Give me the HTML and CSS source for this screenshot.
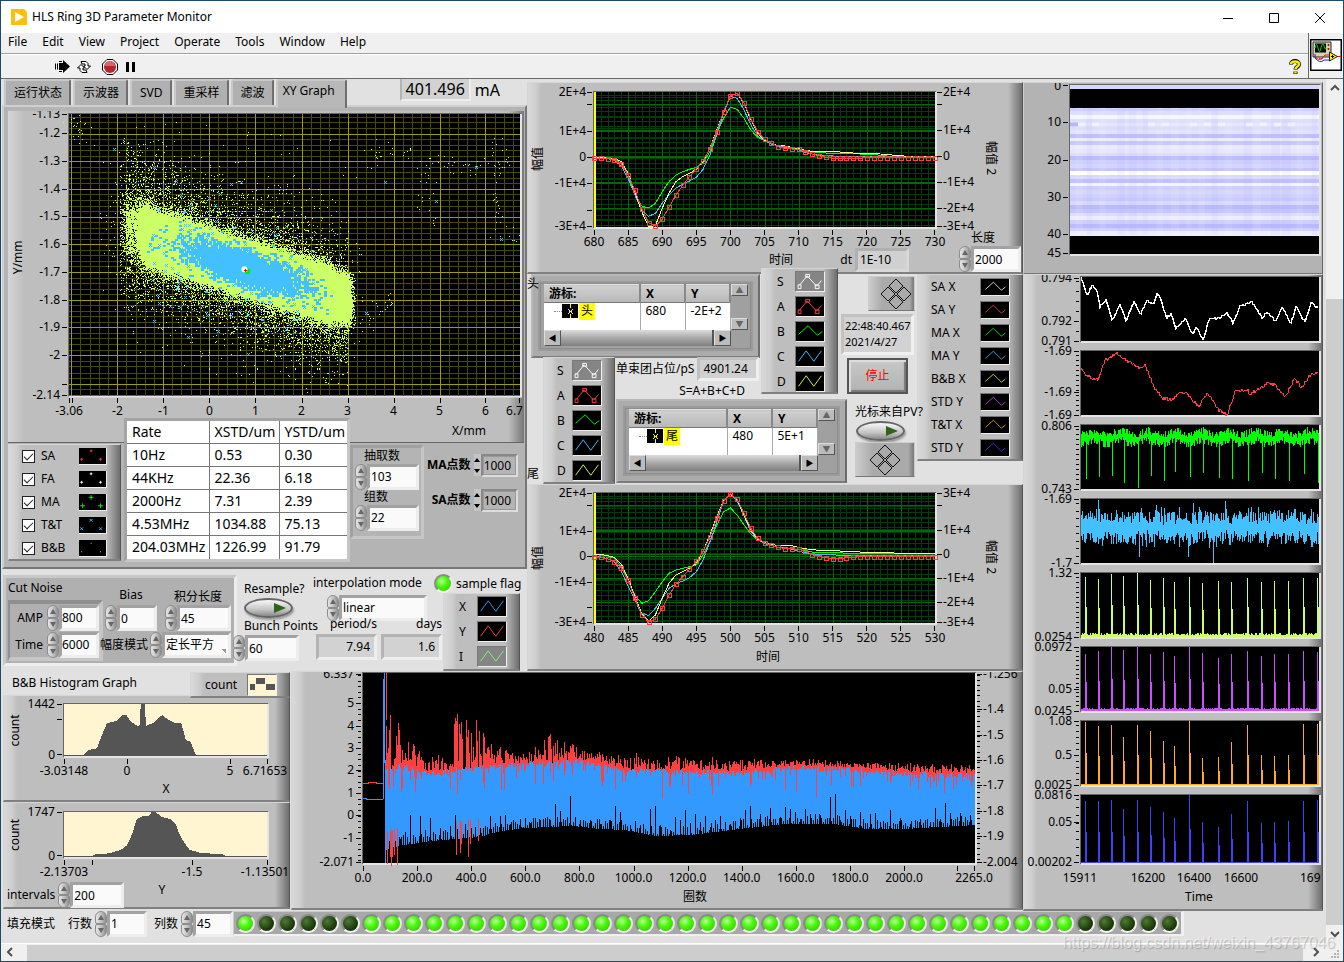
FILE: index.html
```html
<!DOCTYPE html>
<html lang="zh-CN">
<head>
<meta charset="utf-8">
<title>HLS Ring 3D Parameter Monitor</title>
<link rel="stylesheet" href="styles.css">
</head>
<body>
<svg class="defs" aria-hidden="true">
  <defs>
    <symbol id="z1" viewBox="0 0 28 20"><path d="M2 13 L12 4 L22 14 L27 10" fill="none" stroke="currentColor"/></symbol>
    <symbol id="z2" viewBox="0 0 28 20"><path d="M2 15 L10 4 L18 15 L26 4" fill="none" stroke="currentColor"/></symbol>
    <symbol id="zs" viewBox="0 0 28 20"><path d="M3 14 L11 4 L21 15 L26 9 M1.500 13.500h3v4h-3zM9.500 2.500h4v3h-4zM19.500 13.500h4v4h-4z" fill="none" stroke="currentColor"/></symbol>
    <symbol id="p1" viewBox="0 0 28 17"><path d="M1 12h3M2.500 10.500v3M11 3h3M12.500 1.500v3M21 12h3M22.500 10.500v3" stroke="currentColor"/></symbol>
    <symbol id="p2" viewBox="0 0 28 17"><path d="M1 12.500h5M3.500 10v5M10 3.500h5M12.500 1v5M20 12.500h5M22.500 10v5" stroke="currentColor"/></symbol>
    <symbol id="p3" viewBox="0 0 28 17"><path d="M1 11l3 3m0-3l-3 3M11 2l3 3m0-3l-3 3M21 11l3 3m0-3l-3 3" stroke="currentColor"/></symbol>
    <symbol id="p4" viewBox="0 0 28 17"><path d="M2 12.500h1M12 3.500h1M22 12.500h1" stroke="currentColor"/></symbol>
    <symbol id="cur" viewBox="0 0 16 14"><path d="M8.500 0v4M8.500 10v4M6 5l5 5M11 5l-5 5M7 7.500h3" stroke="#ff0" fill="none"/></symbol>
    <symbol id="dia" viewBox="0 0 32 32"><path d="M16 1l7 7-7 7-7-7zM8 9l7 7-7 7-7-7zM24 9l7 7-7 7-7-7zM16 17l7 7-7 7-7-7z" fill="none" stroke="#111"/></symbol>
  </defs>
</svg>
<div class="window">
  <header class="titlebar">
    <svg class="app-icon" viewBox="0 0 16 16"><path d="M0 0h13l3 3v13H0z" fill="#fdbf0f"/><path d="M4 3l9 5-9 5z" fill="#fff"/></svg>
    <h1>HLS Ring 3D Parameter Monitor</h1>
    <div class="win-buttons">
      <button aria-label="Minimize"><svg viewBox="0 0 12 12"><path d="M1 6.500h10" stroke="#000"/></svg></button>
      <button aria-label="Maximize"><svg viewBox="0 0 12 12"><path d="M1.500 1.500h9v9h-9z" fill="none" stroke="#000"/></svg></button>
      <button aria-label="Close"><svg viewBox="0 0 12 12"><path d="M1 1l10 10M11 1L1 11" stroke="#000"/></svg></button>
    </div>
  </header>
  <div class="bars">
    <div class="bars-main">
      <nav class="menubar"><a href="#">File</a><a href="#">Edit</a><a href="#">View</a><a href="#">Project</a><a href="#">Operate</a><a href="#">Tools</a><a href="#">Window</a><a href="#">Help</a></nav>
      <div class="toolbar">
        <button aria-label="Run"><svg viewBox="0 0 16 16"><path d="M1.500 4.500v6M3.500 4.500v6" stroke="#000"/><path d="M5 4h4V1l7 6.500L9 14v-3H5z"/><path d="M5 12.500h3M5 2.500h3" stroke="#000"/></svg></button>
        <button aria-label="Run continuously"><svg viewBox="0 0 16 16"><path d="M5 2.500h5l2 2V7h2.500L11 10.500 7.500 7H9V5H6zM11 13.500H6l-2-2V9H1.500L5 5.500 8.500 9H7v2h3z" fill="#fff" stroke="#000"/></svg></button>
        <button aria-label="Abort" class="abort"><svg viewBox="0 0 16 16"><path d="M5 .5h6L15.500 5v6L11 15.500H5L.5 11V5z" fill="#fff" stroke="#000"/><circle cx="8" cy="8" r="6" fill="#b8262c"/><path d="M3 7a5 5 0 0 1 10 0z" fill="#d8666a"/></svg></button>
        <button aria-label="Pause"><svg viewBox="0 0 16 16"><path d="M2 3h3v10H2zM8 3h3v10H8z"/></svg></button>
        <button aria-label="Help" class="help"><svg viewBox="0 0 12 16"><path d="M2 5.500C2 1 10 1 10 5.200 10 8 6.500 7.500 6.500 10.500M6.500 12.500v2.500" fill="none" stroke="#000" stroke-width="4"/><path d="M2 5C2 1.500 10 1.500 10 5 10 8 6.500 7.500 6.500 10M6.500 12.500v2" fill="none" stroke="#fe0" stroke-width="2.500"/></svg></button>
      </div>
    </div>
    <div class="vi-icon"><svg viewBox="0 0 32 32"><path d="M.5.500h31v31H.5z" fill="#fff" stroke="#000" stroke-width="2"/><path d="M3 3h18v15H3z" fill="#d8d2a8" stroke="#222"/><path d="M5 4.500h11v9H5z" fill="#000"/><path d="M5 9q1.500-7 3 0t3 0 3-2 2 2" fill="none" stroke="#0d0"/><circle cx="18.500" cy="6" r="1" fill="#900"/><circle cx="18.500" cy="10" r="1" fill="#900"/><path d="M5 18q4 4 8 1M20 16h-5q-4 6-6 3M27 17.500h4" fill="none" stroke="#e11"/><path d="M5 15v4q5 6 9 2h6" fill="none" stroke="#22b"/><path d="M19.500 13v9l8-4.500z" fill="#fe0" stroke="#222"/><path d="M21 17.500h3M22.500 16v3" stroke="#000"/></svg></div>
  </div>

  <div class="workspace">
    <main class="front">
      <div class="front-grid">
        <div class="left-wide">
          <div class="upper">
            <section class="col-a">
              <div class="tabrow">
                <div class="tabs" role="tablist">
                  <button role="tab">运行状态</button><button role="tab">示波器</button><button role="tab">SVD</button><button role="tab">重采样</button><button role="tab">滤波</button><button role="tab" class="active" aria-selected="true">XY Graph</button>
                </div>
                <div class="current"><output>401.496</output><span>mA</span></div>
              </div>
              <div class="tabpage">
                <svg class="plot" id="xy" viewBox="8 111 515 330" role="img" aria-label="XY Graph"></svg>
                <div class="xy-lower">
                  <div class="legend-check raised">
                    <div><input type="checkbox" id="k1" checked><label for="k1">SA</label><svg class="c-red"><use href="#p1"/></svg></div>
                    <div><input type="checkbox" id="k2" checked><label for="k2">FA</label><svg class="c-white"><use href="#p1"/></svg></div>
                    <div><input type="checkbox" id="k3" checked><label for="k3">MA</label><svg class="c-green"><use href="#p2"/></svg></div>
                    <div><input type="checkbox" id="k4" checked><label for="k4">T&amp;T</label><svg class="c-sky"><use href="#p3"/></svg></div>
                    <div><input type="checkbox" id="k5" checked><label for="k5">B&amp;B</label><svg class="c-lime"><use href="#p4"/></svg></div>
                  </div>
                  <div class="std-wrap">
                    <table class="std">
                      <tr><th>Rate</th><th>XSTD/um</th><th>YSTD/um</th></tr>
                      <tr><td>10Hz</td><td>0.53</td><td>0.30</td></tr>
                      <tr><td>44KHz</td><td>22.36</td><td>6.18</td></tr>
                      <tr><td>2000Hz</td><td>7.31</td><td>2.39</td></tr>
                      <tr><td>4.53MHz</td><td>1034.88</td><td>75.13</td></tr>
                      <tr><td>204.03MHz</td><td>1226.99</td><td>91.79</td></tr>
                    </table>
                  </div>
                  <div class="sampling">
                    <label for="n1">抽取数</label>
                    <div class="num"><span class="spin"><button aria-label="+"></button><button aria-label="−"></button></span><input id="n1" value="103"></div>
                    <label for="n2">组数</label>
                    <div class="num"><span class="spin"><button aria-label="+"></button><button aria-label="−"></button></span><input id="n2" value="22"></div>
                  </div>
                  <div class="points">
                    <div><label for="n3">MA点数</label><span class="flatspin"><button aria-label="+"></button><button aria-label="−"></button></span><input id="n3" value="1000"></div>
                    <div><label for="n4">SA点数</label><span class="flatspin"><button aria-label="+"></button><button aria-label="−"></button></span><input id="n4" value="1000"></div>
                  </div>
                </div>
              </div>

              <div class="settings">
                <fieldset class="cut">
                  <legend>Cut Noise</legend>
                  <div class="amp">
                    <div><label for="n5">AMP</label><div class="num"><span class="spin"><button aria-label="+"></button><button aria-label="−"></button></span><input id="n5" value="800"></div></div>
                    <div><label for="n6">Time</label><div class="num"><span class="spin"><button aria-label="+"></button><button aria-label="−"></button></span><input id="n6" value="6000"></div></div>
                  </div>
                  <div class="bias">
                    <div class="bias-col"><label for="n7">Bias</label><div class="num"><span class="spin"><button aria-label="+"></button><button aria-label="−"></button></span><input id="n7" value="0"></div></div>
                    <div class="bias-col"><label for="n8">积分长度</label><div class="num w50"><span class="spin"><button aria-label="+"></button><button aria-label="−"></button></span><input id="n8" value="45"></div></div>
                    <div class="mode"><label for="n9">幅度模式</label><div class="num w68"><span class="spin"><button aria-label="+"></button><button aria-label="−"></button></span><select id="n9"><option>定长平方</option></select></div></div>
                  </div>
                </fieldset>
                <div class="resample">
                  <span id="rs">Resample?</span>
                  <button class="toggle" role="switch" aria-labelledby="rs"><i></i></button>
                  <label for="n10">Bunch Points</label>
                  <div class="num w50"><span class="spin"><button aria-label="+"></button><button aria-label="−"></button></span><input id="n10" value="60"></div>
                </div>
                <div class="interp">
                  <label for="n11">interpolation mode</label>
                  <div class="num"><span class="spin"><button aria-label="+"></button><button aria-label="−"></button></span><select id="n11"><option>linear</option></select></div>
                  <div class="outs"><div><span>period/s</span><output>7.94</output></div><div><span>days</span><output>1.6</output></div></div>
                </div>
                <div class="flag">
                  <div class="flag-row"><i class="led on"></i><span>sample flag</span></div>
                  <div class="legend raised xyi">
                    <div><span>X</span><svg class="c-blue"><use href="#z2"/></svg></div>
                    <div><span>Y</span><svg class="c-red"><use href="#z2"/></svg></div>
                    <div><span>I</span><svg class="c-mint gray"><use href="#z2"/></svg></div>
                  </div>
                </div>
              </div>
            </section>

            <section class="col-b">
              <div class="graph-panel raised">
                <svg class="plot" id="g1" viewBox="528 83 494 166" role="img" aria-label="头 波形"></svg>
                <div class="dt-row">
                  <span class="axis-name">时间</span>
                  <label for="dt">dt</label><output id="dt">1E-10</output>
                  <div class="len"><label for="n12">长度</label><div class="num"><span class="spin"><button aria-label="+"></button><button aria-label="−"></button></span><input id="n12" value="2000"></div></div>
                </div>
              </div>
              <div class="mid">
                <span class="tag tag1">头</span>
                <div class="cursor cursor1">
                  <table><tr><th>游标:</th><th>X</th><th>Y</th></tr><tr><td><i class="dots"></i><svg class="cur"><use href="#cur"/></svg><mark>头</mark></td><td>680</td><td>-2E+2</td></tr></table>
                  <div class="vs"><button aria-label="up">▲</button><button aria-label="down">▼</button></div>
                  <div class="hs"><button aria-label="left">◀</button><span></span><button aria-label="right">▶</button></div>
                </div>
                <div class="legend raised lg2">
                  <div><span>S</span><svg class="c-white gray"><use href="#zs"/></svg></div>
                  <div><span>A</span><svg class="c-red"><use href="#zs"/></svg></div>
                  <div><span>B</span><svg class="c-green"><use href="#z1"/></svg></div>
                  <div><span>C</span><svg class="c-sky"><use href="#z2"/></svg></div>
                  <div><span>D</span><svg class="c-lime"><use href="#z2"/></svg></div>
                </div>
                <div class="legend raised lg1">
                  <div><span>S</span><svg class="c-white gray"><use href="#zs"/></svg></div>
                  <div><span>A</span><svg class="c-red"><use href="#zs"/></svg></div>
                  <div><span>B</span><svg class="c-green"><use href="#z1"/></svg></div>
                  <div><span>C</span><svg class="c-sky"><use href="#z2"/></svg></div>
                  <div><span>D</span><svg class="c-lime"><use href="#z2"/></svg></div>
                </div>
                <div class="bunch"><span>单束团占位/pS</span><output>4901.24</output></div>
                <span class="sum">S=A+B+C+D</span>
                <span class="tag tag2">尾</span>
                <div class="cursor cursor2">
                  <table><tr><th>游标:</th><th>X</th><th>Y</th></tr><tr><td><i class="dots"></i><svg class="cur"><use href="#cur"/></svg><mark>尾</mark></td><td>480</td><td>5E+1</td></tr></table>
                  <div class="vs"><button aria-label="up">▲</button><button aria-label="down">▼</button></div>
                  <div class="hs"><button aria-label="left">◀</button><span></span><button aria-label="right">▶</button></div>
                </div>
                <div class="ctl">
                  <button class="dia dia-a" aria-label="移动游标"><svg><use href="#dia"/></svg></button>
                  <output class="clock">22:48:40.467<br>2021/4/27</output>
                  <button class="stop">停止</button>
                  <span id="pv" class="pv">光标来自PV?</span>
                  <button class="toggle" role="switch" aria-labelledby="pv"><i></i></button>
                  <button class="dia dia-b" aria-label="移动游标"><svg><use href="#dia"/></svg></button>
                </div>
                <div class="legend raised lg3">
                  <div><span>SA X</span><svg class="c-white"><use href="#z1"/></svg></div>
                  <div><span>SA Y</span><svg class="c-red"><use href="#z1"/></svg></div>
                  <div><span>MA X</span><svg class="c-green"><use href="#z1"/></svg></div>
                  <div><span>MA Y</span><svg class="c-sky"><use href="#z1"/></svg></div>
                  <div><span>B&amp;B X</span><svg class="c-lime"><use href="#z1"/></svg></div>
                  <div><span>STD Y</span><svg class="c-purple"><use href="#z1"/></svg></div>
                  <div><span>T&amp;T X</span><svg class="c-orange"><use href="#z1"/></svg></div>
                  <div><span>STD Y</span><svg class="c-navy"><use href="#z1"/></svg></div>
                </div>
              </div>
              <div class="graph-panel raised">
                <svg class="plot" id="g2" viewBox="528 485 494 184" role="img" aria-label="尾 波形"></svg>
              </div>
            </section>
          </div>

          <div class="lower">
            <section class="hist">
              <div class="hist-head"><h2>B&amp;B Histogram Graph</h2><div class="count raised"><span>count</span><svg viewBox="0 0 28 20"><path d="M0 0h28v20H0z" fill="#fff5d0"/><path d="M2 9h5v6H2zM8 3h9v6H8zM18 9h9v6h-9z" fill="#555"/></svg></div></div>
              <div class="raised"><svg class="plot" id="h1" viewBox="4 696 285 104" role="img" aria-label="X histogram"></svg></div>
              <div class="raised hist2"><svg class="plot" id="h2" viewBox="4 803 285 104" role="img" aria-label="Y histogram"></svg>
                <div class="intervals"><label for="n13">intervals</label><div class="num w50"><span class="spin"><button aria-label="+"></button><button aria-label="−"></button></span><input id="n13" value="200"></div></div>
              </div>
            </section>
            <section class="raised wave"><svg class="plot" id="wf" viewBox="292 672 730 236" role="img" aria-label="圈数"></svg></section>
          </div>
        </div>

        <section class="col-c">
          <div class="flat"><svg class="plot" id="im" viewBox="1024 83 298 190" role="img" aria-label="填充强度图"></svg></div>
          <div class="raised"><svg class="plot" id="st" viewBox="1024 275 298 634" role="img" aria-label="Time"></svg></div>
        </section>
      </div>

      <div class="fill">
        <span class="fill-name">填充模式</span>
        <label for="n14">行数</label><div class="num"><span class="spin"><button aria-label="+"></button><button aria-label="−"></button></span><input id="n14" value="1"></div>
        <label for="n15" class="second">列数</label><div class="num"><span class="spin"><button aria-label="+"></button><button aria-label="−"></button></span><input id="n15" value="45"></div>
        <div class="leds" id="leds"></div>
      </div>
    </main>
    <div class="vbar"><button aria-label="Scroll up"><svg viewBox="0 0 10 10"><path d="M1 7l4-4 4 4" fill="none" stroke="#505050" stroke-width="2"/></svg></button><span></span><button aria-label="Scroll down"><svg viewBox="0 0 10 10"><path d="M1 3l4 4 4-4" fill="none" stroke="#505050" stroke-width="2"/></svg></button></div>
  </div>
  <div class="hbar"><button aria-label="Scroll left"><svg viewBox="0 0 10 10"><path d="M7 1L3 5l4 4" fill="none" stroke="#505050" stroke-width="2"/></svg></button><span></span><button aria-label="Scroll right"><svg viewBox="0 0 10 10"><path d="M3 1l4 4-4 4" fill="none" stroke="#505050" stroke-width="2"/></svg></button>
    <svg class="grip" viewBox="0 0 10 10"><path d="M7 0h2v2H7zM4 3h2v2H4zM7 3h2v2H7zM1 6h2v2H1zM4 6h2v2H4zM7 6h2v2H7z" fill="#b4b4b4"/></svg></div>
  <span class="watermark">https://blog.csdn.net/weixin_43767046</span>
</div>
<script src="app.js"></script>
</body>
</html>
```
FILE: styles.css
```css
* { box-sizing: border-box; }
body {
  margin: 0;
  font: 12px/16px "Noto Sans", "Noto Sans CJK SC", sans-serif;
  color: #000;
  background: #e1e1e1;
}
button, input, select, output { font: inherit; color: inherit; }
button { padding: 0; border: 0; background: none; }
.defs { position: absolute; width: 0; height: 0; }

.window {
  position: relative;
  display: flex;
  flex-direction: column;
  min-height: 100vh;
  border: 1px solid #1b4a6b;
  background: #e1e1e1;
}
.titlebar { display: flex; align-items: center; height: 32px; padding-left: 10px; background: #fff; }
.app-icon { width: 16px; height: 16px; }
.titlebar h1 { margin: 0 0 0 5px; font-size: 12px; font-weight: 400; flex: 1; }
.win-buttons { display: flex; }
.win-buttons button { width: 46px; height: 30px; }
.win-buttons svg { width: 12px; height: 12px; vertical-align: middle; }

.bars { display: flex; height: 46px; background: #f0f0f0; border-bottom: 1px solid #6a6a6a; }
.bars-main { flex: 1; display: flex; flex-direction: column; }
.menubar { display: flex; gap: 15px; height: 21px; padding: 1px 0 0 7px; border-bottom: 1px solid #a0a0a0; }
.menubar a { color: #000; text-decoration: none; }
.toolbar { display: flex; align-items: center; height: 24px; padding: 0 7px 0 53px; gap: 6px; border-top: 1px solid #fff; }
.toolbar svg { width: 16px; height: 16px; display: block; }
.toolbar .abort { margin-left: 4px; }
.toolbar .help { margin-left: auto; }
.toolbar .help svg { width: 12px; }
.vi-icon { width: 35px; border-left: 1px solid #6a6a6a; padding: 6px 0 0 1px; }
.vi-icon svg { width: 32px; height: 32px; display: block; }

.workspace { flex: 1; display: flex; }
.front { flex: 1; min-width: 0; padding: 0 3px 0 1px; border-bottom: 1px solid #fff; }
.front-grid { display: grid; grid-template-columns: 1021fr 300fr; }
.left-wide { min-width: 0; }
.upper { display: grid; grid-template-columns: 525fr 496fr; height: 592px; }
.lower { display: grid; grid-template-columns: 289fr 732fr; height: 239px; }
.col-a, .col-b, .col-c, .hist { min-width: 0; }
.plot { display: block; width: 100%; height: auto; overflow: hidden; font-size: 12px; }

.raised {
  background: linear-gradient(90deg, #d9d9d9 0, #cecece 8px, #bebebe 13px, #bebebe calc(100% - 14px), #6e6e6e 100%);
  border: 1px solid #d6d6d6;
  border-right-color: #555;
  border-bottom: 2px solid #808080;
}
.flat { background: #b3b3b3; border: 1px solid #d0d0d0; border-right: 1px solid #666; border-bottom: 1px solid #777; }

/* numeric controls */
.num { display: flex; align-items: center; }
.num input, .num select {
  width: 40px; height: 26px; padding: 0 1px; margin: 0;
  border: 3px solid; border-color: #a2a2a2 #ededed #ededed #a2a2a2;
  border-radius: 0; background: #fafafa; appearance: none; outline: 0;
}
.num.w50 input { width: 54px; }
.num.w68 select { width: 69px; background: #fafafa linear-gradient(45deg, transparent 50%, #999 50%) no-repeat 57px 14px / 4px 4px; }
.spin { display: flex; flex-direction: column; width: 12px; height: 26px; }
.spin button {
  flex: 1; position: relative;
  border: 1px solid #8d8d8d; border-radius: 6px 6px 2px 2px;
  background: linear-gradient(90deg, #e6e6e6, #c4c4c4 50%, #8c8c8c);
}
.spin button + button { border-radius: 2px 2px 6px 6px; }
.spin button::before { content: ""; display: block; width: 0; margin: 0 auto; border: 3px solid transparent; border-top: 0; border-bottom: 5px solid #666; }
.spin button + button::before { border-bottom: 0; border-top: 5px solid #666; }

/* tabs */
.tabrow { display: flex; justify-content: space-between; height: 29px; padding-left: 2px; }
.tabs { display: flex; gap: 2px; align-items: flex-start; }
.tabs button {
  height: 26px; padding: 0 7px 1px 8px; white-space: nowrap;
  background: #b0b0b0; border: 2px solid #c8c8c8; border-right-color: #6f6f6f; border-bottom: 0; border-radius: 3px 2px 0 0;
}
.tabs .active { height: 29px; padding: 0 10px 8px 5px; background: #b8b8b8; position: relative; z-index: 1; }
.current { display: flex; align-items: center; gap: 4px; height: 22px; padding-right: 27px; font-size: 16px; }
.current output { height: 22px; padding: 0 4px; line-height: 20px; background: #d2d2d2; border: 2px solid #b4b4b4; border-top: 0; border-right-color: #eee; border-bottom-color: #eee; }
.tabpage { height: 464px; margin-top: -3px; padding: 4px 1px 0 4px; background: #b4b4b4; border: 2px solid #cfcfcf; border-right-color: #777; border-bottom-color: #777; }
#xy { background: linear-gradient(90deg, #d6d6d6 0, #bebebe 16px, #bebebe 97%, #777 100%); border-bottom: 1px solid #666; }

.xy-lower { display: flex; align-items: flex-start; gap: 3px; margin-top: 1px; }
.legend-check { width: 113px; height: 117px; }
.legend-check > div { display: flex; align-items: center; height: 23px; padding-left: 13px; }
.legend-check input { width: 13px; height: 13px; margin: 0 6px 0 0; appearance: none; background: #fff; border: 1px solid #222; }
.legend-check input:checked::before { content: ""; display: block; width: 8px; height: 4px; margin: 2px 1px; border-left: 1px solid #222; border-bottom: 1px solid #222; rotate: -45deg; }
.legend-check label { flex: 1; }
.legend-check svg { width: 28px; height: 17px; margin-right: 13px; background: #000; border-right: 1px solid #eee; border-bottom: 1px solid #eee; }
.std-wrap { position: relative; z-index: 1; flex: none; width: 226px; margin-top: -26px; border: 3px solid #a4a4a4; border-right-color: #c6c6c6; border-bottom-color: #c6c6c6; }
.std { width: 100%; table-layout: fixed; border-collapse: collapse; background: #fff; font-size: 14px; line-height: 20px; }
.std th, .std td { height: 23px; padding: 0 0 0 5px; text-align: left; font-weight: 400; overflow: hidden; white-space: nowrap; border-right: 1px solid #777; border-bottom: 1px solid #777; }
.std th:first-child { width: 82px; }
.std th:nth-child(2) { width: 70px; }
.std tr > :last-child { border-right: 0; }
.std tr:last-child td { border-bottom: 0; }
.sampling { width: 74px; height: 94px; padding: 1px 2px; border: 3px solid #a0a0a0; border-right-color: #c6c6c6; border-bottom-color: #c6c6c6; background: #b4b4b4; margin-left: -3px; margin-top: 1px; }
.sampling label { display: block; padding-left: 9px; height: 15px; line-height: 14px; }
.sampling input { width: 52px; }
.points { padding-top: 10px; }
.points > div { display: flex; align-items: center; justify-content: flex-end; height: 23px; margin-bottom: 12px; }
.points label { font-weight: 700; margin-right: 3px; white-space: nowrap; }
.points input { width: 37px; height: 23px; padding: 0 1px; border: 2px solid #888; border-right-color: #ddd; border-bottom-color: #ddd; outline: 1px solid #999; outline-offset: -3px; background: #b4b4b4; }
.flatspin { display: flex; flex-direction: column; width: 7px; height: 22px; background: #c4c4c4; }
.flatspin button { flex: 1; }
.flatspin button::before { content: ""; display: block; width: 0; margin: 0 auto; border: 3px solid transparent; border-top: 0; border-bottom: 4px solid #000; }
.flatspin button + button::before { border-bottom: 0; border-top: 4px solid #000; }

/* settings strip */
.settings { display: flex; height: 102px; padding: 6px 0 0 1px; }
.cut { display: grid; grid-template-columns: 95px 1fr; grid-template-rows: 22px 1fr; width: 234px; height: 91px; margin: 0; padding: 0 3px 0 2px; border: 3px solid #c8c8c8; border-color: #c8c8c8 #ededed #ededed #c8c8c8; background: #b0b0b0; position: relative; }
.cut legend { float: left; padding: 2px 0; height: 20px; }
.cut .amp { grid-row: 2; border: 4px solid #969696; border-color: #8f8f8f #c6c6c6 #c6c6c6 #8f8f8f; border-left-width: 2px; height: 61px; }
.amp > div { display: flex; align-items: center; justify-content: flex-end; height: 27px; gap: 4px; }
.amp input { padding: 0; }
.bias { grid-column: 2; grid-row: 1 / 3; display: grid; grid-template-columns: 54px 1fr; grid-template-rows: 53px 28px; justify-items: end; }
.bias-col { display: flex; flex-direction: column; align-items: center; justify-content: flex-end; }
.bias-col:first-child label { padding-bottom: 2px; }
.mode { grid-column: 1 / 3; display: flex; align-items: center; gap: 2px; white-space: nowrap; justify-self: end; }
.resample { width: 76px; padding-left: 7px; white-space: nowrap; display: flex; flex-direction: column; }
.resample > span { padding-top: 6px; height: 23px; }
.resample .num { margin: 1px 0 0 -11px; position: relative; }
.toggle { width: 49px; height: 20px; border-radius: 50% / 50%; border: 2px solid #666; background: linear-gradient(#f8f8f8, #c4c4c4 60%, #8a8a8a); box-shadow: 1px 2px 2px #999; display: flex; align-items: center; justify-content: flex-end; padding-right: 5px; }
.toggle i { border: 5px solid transparent; border-left: 12px solid #2f6418; border-right: 0; }
.interp { width: 120px; white-space: nowrap; display: flex; flex-direction: column; }
.interp > label { height: 20px; }
.interp .num { padding-left: 14px; }
.interp select { width: 88px; }
.outs { display: flex; gap: 4px; margin-top: -5px; padding-left: 3px; }
.outs div { display: flex; flex-direction: column; align-items: flex-end; }
.outs output { width: 61px; height: 26px; padding-right: 4px; line-height: 20px; text-align: right; background: #d2d2d2; border: 3px solid #b4b4b4; border-right-color: #eee; border-bottom-color: #eee; }
.outs span { height: 18px; }
.flag { margin-left: auto; width: 93px; }
.flag-row { display: flex; align-items: center; gap: 3px; height: 17px; white-space: nowrap; }
.led { flex: none; width: 19px; height: 19px; border-radius: 50%; border: 2px solid; border-color: #8a8a8a #eee #f4f4f4 #8a8a8a; background: radial-gradient(circle at 35% 35%, #4d7a34, #1d3c0a 60%, #102404); }
.led.on { background: radial-gradient(circle at 38% 35%, #b8ff9a, #49f80a 40%, #39d800 75%, #2aa500); }

.legend > div { display: flex; align-items: center; height: 25px; padding: 0 12px 0 15px; justify-content: space-between; }
.legend svg { width: 30px; height: 21px; background: #000; border: 1px solid #777; border-right-color: #eee; border-bottom-color: #eee; }
.legend svg.gray { background: #858585; }
.xyi { width: 77px; margin: 1px 0 0 9px; }
.c-red { color: #ff4040; } .c-white { color: #fff; } .c-green { color: #0f0; } .c-sky { color: #42c0ff; }
.c-lime { color: #ccff66; } .c-blue { color: #3399ff; } .c-mint { color: #80f080; } .c-purple { color: #c850ff; }
.c-orange { color: #ffab1c; } .c-navy { color: #4040ff; }

/* waveform graphs and the cursor block */
.col-b { padding-top: 3px; }
.graph-panel { position: relative; }
.dt-row { display: flex; align-items: flex-end; height: 41px; margin-top: -18px; padding: 0 1px 0 241px; }
.axis-name { height: 20px; }
.dt-row > label { margin-left: auto; height: 20px; }
#dt { width: 54px; height: 24px; margin: 0 50px 0 3px; padding: 0 2px; line-height: 18px; background: #d0d0d0; border: 3px solid #b0b0b0; border-right-color: #d8d8d8; border-bottom-color: #d8d8d8; }
.len label { display: block; padding-left: 12px; height: 14px; line-height: 12px; }
.len input { width: 50px; }
.mid { display: grid; grid-template-columns: minmax(0, 10fr) minmax(0, 78fr) minmax(0, 145fr) minmax(0, 87fr) minmax(0, 70fr) minmax(0, 106fr); grid-template-rows: 84px 24px 18px 84px; }
.tag { grid-column: 1; z-index: 2; }
.tag1 { grid-row: 1; padding-top: 2px; }
.tag2 { grid-row: 4; align-self: end; padding-bottom: 2px; }
.cursor {
  display: grid; grid-template-columns: 1fr 18px; grid-template-rows: 46px 16px;
  padding: 8px 9px 8px 11px; background: #a0a0a0;
  border: 2px solid #b8b8b8; border-right-color: #6c6c6c; border-bottom-color: #7b7b7b;
  box-shadow: inset 0 0 0 5px #ababab, inset 0 0 0 7px #9a9a9a, inset 0 0 0 8px #8c8c8c;
}
.cursor1 { grid-area: 1 / 1 / 2 / 4; margin-left: 4px; }
.cursor2 { grid-area: 4 / 3 / 5 / 5; margin: -1px 0 1px 1px; }
.cursor table { width: 100%; height: 46px; border-collapse: collapse; table-layout: fixed; background: #fff; }
.cursor th { width: 45px; height: 18px; padding: 0 0 0 5px; text-align: left; line-height: 14px; background: linear-gradient(#d0d0d0, #b8b8b8); border-top: 1px solid #e4e4e4; border-right: 2px solid #888; border-bottom: 1px solid #777; }
.cursor th:first-child { width: auto; }
.cursor td { padding: 0 0 0 5px; vertical-align: top; border-right: 1px solid #aaa; white-space: nowrap; overflow: hidden; }
.cursor td:first-child { padding-left: 10px; }
.dots { display: inline-block; width: 8px; height: 9px; border-bottom: 1px dotted #888; vertical-align: top; }
.cur { width: 16px; height: 14px; margin-top: 1px; background: #000; vertical-align: top; }
mark { display: inline-block; height: 17px; margin-left: 1px; padding: 0 2px; background: #ff0; line-height: 16px; }
.vs, .hs { display: flex; background: #a0a0a0; }
.vs { flex-direction: column; justify-content: space-between; }
.vs button, .hs button { width: 17px; height: 12px; font-size: 8px; line-height: 10px; background: #bcbcbc; border: 1px solid #ddd; border-right-color: #555; border-bottom-color: #555; color: #666; }
.hs button { height: 16px; color: #000; }
.hs span { flex: 1; background: linear-gradient(#ddd, #a8a8a8 50%, #808080); border-right: 2px solid #555; }
.lg2 { grid-area: 1 / 4 / 4 / 5; width: 77px; margin: -6px 0 6px 1px; z-index: 1; }
.lg1 { grid-area: 2 / 2 / 5 / 3; margin: -1px 0 0 6px; }
.legend.lg1 > div { padding-left: 13px; }
.bunch { grid-area: 2 / 3 / 3 / 5; display: flex; align-items: center; gap: 3px; margin-top: -2px; padding-left: 1px; white-space: nowrap; }
.bunch output { width: 62px; height: 24px; padding: 0 3px; line-height: 18px; background: #d0d0d0; border: 3px solid #c0c0c0; border-right-color: #eee; border-bottom-color: #eee; }
.sum { grid-area: 3 / 3 / 4 / 4; text-align: right; padding: 1px 15px 0 0; }
.ctl { grid-area: 1 / 5 / 5 / 6; display: flex; flex-direction: column; align-items: flex-start; margin-left: -6px; padding-top: 2px; z-index: 1; }
.dia { display: flex; justify-content: center; align-items: center; height: 35px; flex: none; background: linear-gradient(90deg, #ccc, #aaa 30%, #aaa 90%, #777); border: 1px solid #ccc; border-bottom-color: #777; }
.dia svg { width: 32px; height: 32px; }
.dia-a { width: 47px; margin-left: 27px; padding-left: 9px; }
.dia-b { width: 60px; margin-left: 14px; }
.clock { width: 73px; height: 41px; margin-top: 3px; padding: 1px; font-size: 11px; line-height: 16px; background: #d2d2d2; border: 3px solid #c2c2c2; border-right-color: #f0f0f0; border-bottom-color: #f0f0f0; white-space: nowrap; }
.stop { width: 61px; height: 36px; margin: 3px 0 0 6px; color: #f00; background: linear-gradient(#c8c8c8, #b2b2b2); border: 2px solid #555; box-shadow: inset 2px 2px 1px #ddd, inset -2px -2px 1px #777; }
.pv { height: 27px; padding-top: 10px; margin-left: 14px; white-space: nowrap; }
.ctl .toggle { margin: 0 0 1px 15px; flex: none; }
.lg3 { grid-area: 1 / 6 / 5 / 7; align-self: start; }
.legend.lg3 > div { height: 23px; padding: 0 12px 0 13px; }
.legend.lg3 svg { height: 18px; }

/* histograms */
.hist { padding: 0 1px; }
.hist-head { display: flex; justify-content: space-between; height: 24px; }
.hist-head h2 { margin: 4px 0 0 9px; font-size: 12px; font-weight: 400; }
.count { display: flex; align-items: center; gap: 10px; width: 100px; height: 26px; margin-top: 1px; padding-left: 14px; z-index: 1; }
.count svg { width: 30px; height: 22px; border: 1px solid #777; border-right-color: #eee; border-bottom-color: #eee; }
.hist2 { position: relative; }
.intervals { position: absolute; left: 3px; bottom: -1px; display: flex; align-items: center; gap: 3px; }
.wave { height: 239px; }

.col-c { padding-top: 3px; }

/* fill pattern row */
.fill { display: flex; align-items: center; height: 25px; padding-left: 5px; white-space: nowrap; }
.fill-name { margin-right: 13px; }
.fill label { margin-right: 3px; }
.fill .second { margin-left: 7px; }
.leds { display: flex; gap: 2px; height: 25px; align-items: center; padding: 0 2px; background: #a8a8a8; border: 1px solid #ccc; border-right: 3px solid #f0f0f0; border-bottom: 2px solid #f0f0f0; }

/* scroll bars */
.vbar { display: flex; flex-direction: column; width: 17px; background: #f0f0f0; }
.vbar button { height: 19px; }
.vbar svg, .hbar button svg { width: 10px; height: 10px; }
.vbar span { flex: 1; margin-top: 201px; background: #cdcdcd; }
.hbar { display: flex; align-items: center; height: 17px; background: #f0f0f0; }
.hbar button { width: 26px; height: 17px; line-height: 12px; }
.hbar span { flex: 1; height: 16px; background: #cdcdcd; }
.hbar button:first-child { width: 17px; margin-right: 9px; }
.grip { width: 10px; height: 10px; margin: 4px 3px 0 1px; }
.watermark { position: absolute; right: 8px; bottom: 8px; font: 16px/20px "Liberation Sans", sans-serif; color: rgba(255, 255, 255, .5); text-shadow: 1px 1px 1px rgba(90, 90, 90, .35); }
```
FILE: app.js
```js
const NS = 'http://www.w3.org/2000/svg';
let seed = 12345;
function rnd() { seed = (seed * 1103515245 + 12345) % 2147483648; return seed / 2147483648; }
function gauss() { return (rnd() + rnd() + rnd() + rnd() - 2) * 1.7; }
function el(svg, tag, attrs, text) {
  const n = document.createElementNS(NS, tag);
  for (const k in attrs) n.setAttribute(k, attrs[k]);
  if (text !== undefined) n.textContent = text;
  svg.appendChild(n);
  return n;
}
const $ = id => document.getElementById(id);
const rect = (s, x, y, w, h, fill) => el(s, 'rect', { x, y, width: w, height: h, fill });
const path = (s, d, stroke, w = 1) => el(s, 'path', { d, stroke, fill: 'none', 'stroke-width': w, 'shape-rendering': 'crispEdges' });
const label = (s, x, y, t, anchor = 'middle') => t === '' ? null : el(s, 'text', { x, y: y + 4, 'text-anchor': anchor }, t);
function rotated(s, x, y, t, a) { el(s, 'text', { x: 0, y: 4, 'text-anchor': 'middle', transform: `translate(${x} ${y}) rotate(${a})` }, t); }
function frame(s, x, y, w, h, fill) {
  rect(s, x - 1, y - 1, w + 2, h + 2, '#666');
  rect(s, x, y, w + 2, h + 2, '#e4e4e4');
  rect(s, x, y, w, h, fill);
}
const hticks = (xs, y, len = 5) => xs.map(x => `M${Math.round(x) + .5} ${y}v${len}`).join('');
const vticks = (ys, x, len = 5) => ys.map(y => `M${x} ${Math.round(y) + .5}h${len}`).join('');
function range(a, b, step) { const r = []; for (let v = a; v <= b; v += step) r.push(v); return r; }
function lerpPts(p, x) {
  for (let i = 1; i < p.length; i++) if (x <= p[i][0]) {
    const [a, b] = [p[i - 1], p[i]];
    return a[1] + (b[1] - a[1]) * (x - a[0]) / (b[0] - a[0] || 1);
  }
  return p[p.length - 1][1];
}

/* beam position scatter */
(function () {
  const s = $('xy'), L = 69, T = 114, R = 519, B = 395;
  frame(s, L, T, R - L, B - T, '#000');
  const X = v => 209 + v * 45.9, Y = v => 133.500 + (-1.2 - v) * 277;
  let mi = '', ma = '';
  for (let i = -15; i <= 33; i++) { const x = Math.round(X(i / 5)) + .5; if (x > L && x < R) { if (i % 5) mi += `M${x} ${T}V${B}`; else ma += `M${x} ${T}V${B}`; } }
  for (let i = -3; i <= 46; i++) { const y = Math.round(Y(-1.2 - i / 50)) + .5; if (y > T && y < B) { if (i % 5) mi += `M${L} ${y}H${R}`; else ma += `M${L} ${y}H${R}`; } }
  path(s, mi, '#4a4a08'); path(s, ma, '#9c9c08');
  const c = x => 236 + (x - 143) * .305;
  let y1 = '';
  for (let x = 96; x < 362; x++) {
    const left = Math.max(0, Math.min(1, (x - 136) / 12));
    for (let y = 118; y < 392; y++) {
      const d = y - c(x), a = Math.abs(d);
      let p = 1.5 * Math.exp(-Math.pow(a / (x > 330 ? 24 : 29), 4)) * left;
      if (x < 150) p += .42 * Math.exp(-Math.pow((y - 228) / 26, 4));
      p += .22 * Math.exp(-Math.pow(a / 48, 2.5));
      if (d < 0) p += .19 * Math.max(0, 1 - (x - 130) / 190) * Math.exp(-Math.pow(a / 66, 3));
      else p += .12 * Math.exp(-Math.pow(a / 64, 4)) + .2 * Math.max(0, (x - 250) / 95) * Math.exp(-Math.pow(a / 50, 2));
      p += .012 * Math.exp(-Math.pow(a / 105, 4));
      if (x < 120) p *= .05 * Math.max(0, (x - 94) / 26);
      else if (x < 126) p *= .5;
      if (x > 345) p *= Math.max(0, 1 - (x - 345) / 10);
      if (x > 347 && a > 28) p *= .15;
      if (x > 349) p = Math.max(p, a < 60 ? .01 : 0);
      if (rnd() < p) y1 += `M${x} ${y}.5h1`;
    }
  }
  const trails = [[[355, 175], [380, 150], [410, 150]], [[425, 160], [420, 190], [432, 225]], [[440, 162], [455, 168], [490, 166]], [[492, 135], [505, 160], [493, 175]], [[492, 190], [500, 230], [518, 240]], [[360, 328], [385, 310], [385, 295]], [[72, 118], [76, 124], [88, 145]], [[122, 140], [132, 150], [138, 165]]];
  trails.forEach(t => { for (let i = 0; i < 26; i++) { const k = rnd() * 2, j = Math.floor(k), f = k - j; y1 += `M${Math.round(t[j][0] + (t[j + 1][0] - t[j][0]) * f + gauss() * 5)} ${Math.round(t[j][1] + (t[j + 1][1] - t[j][1]) * f + gauss() * 5)}.5h1`; } });
  path(s, y1, '#ccff66');
  let b = '';
  for (let x = 145; x < 335; x += 2) for (let y = 205; y < 330; y += 2) {
    const dx = x - 242, dy = y - (267 + dx * .31), r = Math.hypot(dx / 92, dy / 27);
    if (rnd() < 1.15 / (1 + Math.exp((r - .68) * 9))) b += `M${x} ${y + 1}h3`;
  }
  path(s, b, '#42c0ff', 2);
  let k = '';
  const cross = (x, y) => { k += `M${x - 1} ${y - .5}h1M${x + 1} ${y - .5}h1M${x} ${y + .5}h1M${x - 1} ${y + 1.5}h1M${x + 1} ${y + 1.5}h1`; };
  for (let i = 0; i < 130; i++) { const x = Math.round(150 + rnd() * 165); cross(x, Math.round(c(x) + gauss() * 34)); }
  [[114, 149], [154, 167], [384, 182], [435, 201], [475, 167], [365, 313], [188, 337], [248, 354], [500, 239]].forEach(p => cross(...p));
  path(s, k, '#42c0ff');
  el(s, 'circle', { cx: 247, cy: 271, r: 3, fill: '#0e0' });
  el(s, 'circle', { cx: 244, cy: 269, r: 3, fill: '#fff' });
  path(s, 'M244 270.500h3M245.500 269v3', '#f00');
  const ys = [[133, '-1.2'], [161, '-1.3'], [189, '-1.4'], [216, '-1.5'], [244, '-1.6'], [272, '-1.7'], [300, '-1.8'], [327, '-1.9'], [355, '-2'], [394, '-2.14'], [114, '-1.13']];
  ys.forEach(([y, t]) => label(s, 60, y, t, 'end'));
  path(s, vticks(ys.map(v => v[0]).concat(383), 62), '#000');
  path(s, hticks([69, 72].concat(range(-2, 6, 1).map(X), 518), 397), '#000');
  range(-2, 6, 1).forEach(v => label(s, X(v), 410, v));
  label(s, 69, 410, '-3.06'); label(s, 522, 410, '6.7', 'end'); label(s, 468, 430, 'X/mm');
  rotated(s, 18, 257, 'Y/mm', -90);
})();

/* bunch profile graphs */
function profile(id, top, bottom, x0, data, left, right, majors, offY, xl, names) {
  const s = $(id), L = 594, R = 935;
  frame(s, L, top, R - L, bottom - top, '#000');
  let mi = '', ma = '';
  for (let i = 1; i < 50; i++) { const x = Math.round(L + i * 6.82) + .5; if (i % 5) mi += `M${x} ${top}V${bottom}`; }
  for (let y = top + 3; y < bottom; y += 5.200) mi += `M${L} ${Math.round(y) + .5}H${R}`;
  for (let y = top + 5; y < bottom; y += 10.200) mi += `M${L} ${Math.round(y) + .5}H${R}`;
  for (let i = 5; i < 50; i += 5) ma += `M${Math.round(L + i * 6.82) + .5} ${top}V${bottom}`;
  path(s, mi, '#003c0c'); path(s, ma + vticks(majors, L, R - L), '#006a08');
  path(s, `M${L + 1} ${top}V${bottom}`, '#ff0', 2);
  const pt = (a, i) => [L + i * 6.82, (a[Math.min(i, a.length - 1)]) / 3 + offY];
  [['#0f0', 1], ['#42c0ff', 2], ['#f0ff90', 3], ['#ff4040', 0]].forEach(([col, k]) => {
    let d = ''; for (let i = 0; i <= 50; i++) { const p = pt(data[k], i); d += (i ? 'L' : 'M') + p[0].toFixed(1) + ' ' + p[1].toFixed(1); }
    path(s, d, col);
  });
  let m = ''; for (let i = 0; i <= 50; i++) { const p = pt(data[0], i); m += `M${Math.round(p[0]) - 1.5} ${Math.round(p[1]) - 1.5}h4v4h-4z`; }
  path(s, m, '#ff4040');
  left.forEach(([y, t]) => label(s, 586, y, t, 'end'));
  right.forEach(([y, t]) => label(s, 943, y, t, 'start'));
  path(s, vticks(left.map(v => v[0]), 587) + vticks(right.map(v => v[0]), 937), '#000');
  for (let i = 0; i <= 10; i++) label(s, L + i * 34.1, xl, x0 + i * 5);
  path(s, hticks(range(0, 10, 1).map(i => L + i * 34), bottom + 3), '#000');
  rotated(s, 538, names, '幅值', -90); rotated(s, 991, names - 1, '幅值 2', 90);
}
profile('g1', 92, 227, 680, [
  [235, 235, 236, 241, 253, 284, 331, 386, 428, 438, 418, 382, 346, 316, 290, 266, 242, 206, 155, 95, 47, 40, 68, 116, 155, 178, 190, 200, 205, 207, 208, 215, 222, 227, 232, 235, 235, 235, 235, 235, 233],
  [232, 232, 234, 238, 250, 285, 340, 378, 384, 370, 335, 305, 285, 275, 268, 262, 250, 215, 160, 115, 82, 88, 115, 150, 172, 182, 190, 197, 200, 204, 210, 214, 216, 218, 219, 220, 220, 221, 221, 222, 222, 223, 226, 228],
  [234, 234, 236, 242, 258, 295, 345, 390, 409, 400, 370, 345, 325, 312, 303, 292, 268, 225, 165, 100, 48, 55, 90, 135, 168, 183, 192, 198, 202, 206, 210, 217, 222, 225, 227, 228, 229],
  [232, 232, 233, 235, 245, 280, 335, 395, 440, 437, 385, 340, 305, 290, 280, 268, 245, 205, 150, 95, 47, 40, 70, 120, 160, 180, 190, 197, 198, 202, 206, 211, 214, 214, 214, 214, 216, 217, 219, 219, 220, 221, 222, 223, 226, 227, 229]],
  [[92, '2E+4'], [104, ''], [131, '1E+4'], [157, '0'], [183, '-1E+4'], [210, ''], [226, '-3E+4']],
  [[92, '2E+4'], [104, ''], [130, '1E+4'], [156, '0'], [182, '-1E+4'], [208, '-2E+4'], [226, '-3E+4']],
  [104, 130, 131, 156, 157, 182, 183, 208], 80, 242, 159);
profile('g2', 493, 623, 480, [
  [230, 232, 236, 245, 265, 301, 355, 404, 426, 418, 385, 346, 313, 290, 268, 244, 214, 172, 115, 64, 42, 58, 100, 145, 175, 188, 196, 202, 206, 206, 208, 214, 224, 230, 233, 236, 236, 233, 232, 230],
  [223, 223, 228, 235, 262, 300, 345, 370, 362, 335, 305, 280, 270, 265, 260, 255, 225, 185, 135, 95, 84, 105, 135, 162, 180, 188, 195, 202, 205, 206, 208, 212, 216, 218, 218, 216, 218, 220],
  [230, 231, 236, 246, 275, 318, 360, 402, 406, 385, 355, 325, 312, 303, 293, 275, 240, 185, 125, 65, 43, 62, 108, 155, 180, 190, 197, 202, 205, 208, 214, 218, 222, 224, 222, 224, 226],
  [222, 223, 227, 232, 252, 295, 350, 400, 424, 405, 355, 310, 285, 275, 265, 250, 215, 165, 110, 62, 42, 60, 105, 150, 178, 188, 194, 196, 196, 197, 202, 206, 209, 211, 210, 212, 213, 214, 214, 216, 216, 216, 217, 218, 219, 220]],
  [[493, '2E+4'], [505, ''], [531, '1E+4'], [556, '0'], [582, '-1E+4'], [607, ''], [622, '-3E+4']],
  [[493, '3E+4'], [505, ''], [530, '1E+4'], [554, '0'], [578, '-1E+4'], [602, '-2E+4'], [622, '-3E+4']],
  [505, 530, 531, 554, 556, 578, 602], 480, 638, 558);
label($('g2'), 768, 657, '时间');

/* histograms */
function hist(id, top, base, pts, yl, ym, xs, name, ny) {
  const s = $(id);
  frame(s, 64, top, 203, base - top + 1, '#fff5d0');
  const f = pts.map(p => [p[0] / 2.958, p[1] / 3 + 560]);
  let d = `M${f[0][0]} ${base}`;
  for (let x = Math.round(f[0][0]); x < f[f.length - 1][0]; x++) d += `L${x} ${Math.round(lerpPts(f, x))}h1`;
  el(s, 'path', { d: d + `V${base}z`, fill: '#555', 'shape-rendering': 'crispEdges' });
  path(s, `M64 ${base}h203`, '#555');
  label(s, 55, top, yl, 'end'); label(s, 55, base, '0', 'end');
  path(s, vticks([top, base - 1].concat(ym), 57) + hticks(xs.map(v => v[0]), base + 4), '#000');
  xs.forEach(([x, t]) => label(s, x === 267 ? 265 : x, base + 16, t));
  label(s, name === 'X' ? 166 : 162, ny, name);
  rotated(s, 15, (top + base) / 2 + 1, 'count', -90);
}
hist('h1', 704, 755, [[247, 583], [262, 570], [285, 565], [300, 525], [315, 490], [345, 482], [357, 467], [372, 464], [385, 485], [405, 497], [411, 497], [415, 433], [426, 433], [431, 497], [450, 490], [478, 465], [495, 478], [515, 488], [535, 490], [548, 540], [562, 545], [577, 583]], '1442', [719], [[64, '-3.03148'], [127, '0'], [230, '5'], [267, '6.71653']], 'X', 789);
hist('h2', 812, 856, [[275, 884], [320, 880], [355, 870], [375, 855], [390, 820], [402, 780], [415, 770], [440, 767], [447, 757], [460, 757], [475, 770], [505, 778], [520, 795], [530, 825], [545, 850], [560, 870], [590, 878], [663, 884]], '1747', [], [[64, '-2.13703'], [92, ''], [192, '-1.5'], [267, '-1.13501']], 'Y', 890);

/* turn-by-turn waveform */
(function () {
  const s = $('wf'), L = 363, T = 673, R = 975, B = 863;
  frame(s, L, T, R - L, B - T, '#000');
  const bt = [[386, 768], [400, 764], [431, 771], [479, 765], [526, 762], [573, 759], [600, 762], [625, 768], [667, 769], [750, 770], [785, 765], [850, 767], [900, 771], [975, 773]];
  const bb = [[386, 850], [398, 846], [431, 841], [479, 837], [500, 831], [526, 828], [573, 826], [600, 829], [625, 830], [655, 836], [690, 835], [730, 830], [785, 824], [833, 824], [866, 829], [903, 829], [975, 825]];
  const rt = [[386, 680], [390, 690], [394, 715], [400, 720], [408, 738], [420, 750], [440, 754], [450, 730], [458, 706], [475, 706], [482, 722], [500, 746], [520, 752], [535, 746], [548, 732], [562, 734], [580, 750], [640, 753], [700, 756], [900, 762], [975, 763]];
  let red = '', blue = '', cut = '', over = '', low = '';
  for (let x = 386; x < R; x++) {
    const t = lerpPts(bt, x), b = lerpPts(bb, x), r = lerpPts(rt, x);
    red += `M${x}.5 ${Math.round(r + Math.pow(rnd(), .7) * (t - r) * 1.1)}V${Math.round(t + 20)}`;
    blue += `M${x}.5 ${Math.round(t + rnd() * 5)}V${Math.round(b - (x % 2) * rnd() * 10)}`;
    if (rnd() < .28) over += `M${x}.5 ${Math.round(t)}v${Math.round(4 + rnd() * rnd() * 30)}`;
    if (x % 5 === 0) cut += `M${x}.5 ${Math.round(b)}v-${Math.round(5 + rnd() * rnd() * 30)}`;
    if ((x < 400 && rnd() < .3) || (x > 452 && x < 480 && rnd() < .18)) low += `M${x}.5 ${Math.round(b - 18)}V${Math.round(b + rnd() * 20)}`;
  }
  path(s, red, '#ff4040'); path(s, blue, '#3399ff'); path(s, over, '#ff4040'); path(s, cut, '#000'); path(s, low, '#ff4040');
  path(s, 'M363 783.500h5v-1h8v1h8M386.500 673V720', '#ff4040');
  path(s, 'M363 798.500h3v1h17M383.500 799V679M384.500 673v90M385.500 760V863', '#3399ff');
  const ly = [[674, '6.337'], [703, '5'], [726, '4'], [748, '3'], [770, '2'], [793, '1'], [815, '0'], [838, '-1'], [862, '-2.071']];
  const ry = [[674, '-1.256'], [709, '-1.4'], [735, '-1.5'], [760, '-1.6'], [785, '-1.7'], [811, '-1.8'], [836, '-1.9'], [862, '-2.004']];
  ly.forEach(([y, t]) => label(s, 354, y, t, 'end')); ry.forEach(([y, t]) => label(s, 983, y, t, 'start'));
  path(s, vticks(ly.map(v => v[0]), 356) + vticks(range(675, 862, 5.62), 358, 3) + vticks(ry.map(v => v[0]), 977) + vticks(range(675, 862, 5.1), 977, 3), '#000');
  for (let i = 0; i <= 10; i++) label(s, 363 + i * 54.1, 878, (i * 200) + '.0');
  label(s, 974, 878, '2265.0'); label(s, 695, 897, '圈数');
  path(s, hticks(range(0, 10, 1).map(i => 363 + i * 54.1).concat(957, 974), 866), '#000');
})();

/* fill intensity map */
(function () {
  const s = $('im'), L = 1070, T = 85, H = 169 / 45;
  frame(s, L, T, 249, 169, '#000');
  const v = [216, 0, 0, 0, 0, 0, 207, 222, 246, 222, 230, 220, 226, 192, 236, 200, 234, 230, 220, 188, 206, 212, 196, 255, 218, 192, 244, 206, 214, 208, 202, 216, 186, 198, 220, 236, 206, 186, 208, 236, 0, 0, 0, 0, 0];
  v.forEach((c, i) => { if (c) el(s, 'rect', { x: L, y: T + i * H, width: 249, height: H + .3, fill: `rgb(${c},${c},255)`, 'shape-rendering': 'crispEdges' }); });
  for (let x = L; x < L + 240; x += 14) {
    el(s, 'rect', { x: x + rnd() * 6, y: T + 6 * H, width: 5 + rnd() * 4, height: 34 * H, fill: rnd() < .5 ? '#fff' : '#a8a8ff', opacity: .1 });
    if (rnd() < .6) rect(s, x + 8, T + 10 * H, 7, H, '#f2f2ff');
  }
  rect(s, L, T + 10 * H, 8, H, '#b8b8ff');
  [[86, 0], [122, 10], [160, 20], [197, 30], [234, 40], [253, 45]].forEach(([y, t]) => label(s, 1061, y, t, 'end'));
  path(s, vticks([85, 122, 160, 197, 234, 253], 1063), '#000');
})();

/* strip charts */
(function () {
  const s = $('st'), L = 1081, W = 238;
  const tops = [277, 351, 425, 499, 573, 647, 721, 795];
  tops.forEach((t, i) => frame(s, L, t, W, i === 7 ? 68 : 64, '#000'));
  const trace = (flat, col, amp, w) => {
    const p = []; for (let i = 0; i < flat.length; i += 2) p.push([flat[i] / 3 + 1020, flat[i + 1] / 3 + 270]);
    let d = ''; for (let x = L; x < L + W; x++) d += (d ? 'L' : 'M') + x + ' ' + (lerpPts(p, x) + (rnd() - .5) * amp).toFixed(1);
    path(s, d, col, w);
  };
  trace([184, 25, 202, 78, 216, 45, 230, 60, 240, 110, 258, 90, 277, 152, 300, 105, 318, 152, 342, 95, 362, 132, 382, 92, 400, 105, 412, 68, 425, 95, 440, 145, 453, 130, 468, 175, 497, 145, 517, 192, 530, 172, 550, 213, 568, 145, 598, 145, 620, 128, 640, 160, 660, 108, 697, 97, 727, 145, 740, 125, 768, 155, 787, 110, 812, 163, 828, 110, 855, 157, 873, 98, 896, 115], '#fff', 2, 1.4);
  trace([184, 297, 195, 315, 215, 325, 234, 328, 255, 272, 290, 248, 310, 265, 335, 280, 360, 295, 375, 288, 405, 355, 430, 385, 455, 390, 480, 368, 500, 370, 535, 410, 560, 375, 570, 378, 595, 420, 622, 435, 645, 365, 680, 358, 690, 372, 725, 355, 745, 335, 765, 345, 797, 378, 825, 325, 845, 355, 870, 315, 896, 310], '#ff4040', 3.500, 1);
  const sx = [198, 237, 275, 313, 353, 392, 432, 466, 509, 548, 597, 637, 683, 726, 764, 808, 851, 895].map(x => Math.round(x / 3 + 1020));
  const dips = [627, 620, 618, 640, 660, 617, 632, 605, 622, 608, 623, 627, 632, 608, 627, 632, 612, 640];
  let g = '', b = '';
  for (let x = L; x < L + W; x++) {
    const y = 437 + 2 * Math.sin((x - 1100) / 4.3);
    g += `M${x}.5 ${Math.round(y - 1 - rnd() * 7)}V${Math.round(y + 2 + rnd() * 7)}`;
    b += `M${x}.5 ${Math.round(525 - rnd() * 13 - rnd() * rnd() * 8)}V${Math.round(530 + rnd() * 13 + rnd() * rnd() * 10)}`;
  }
  sx.forEach((x, i) => { const y = Math.min(488, Math.round((dips[i]) / 3 + 270)); g += `M${x}.5 437V${y}`; });
  b += 'M1098.500 500V530M1213.500 530V563M1225.500 501v30M1193.500 503v30M1188.500 530v27M1139.500 530v27';
  path(s, g, '#0f0');
  path(s, b, '#42c0ff');
  const comb = (base, col, flat, w) => {
    let d = '';
    sx.forEach((x, i) => {
      const y = flat[i] / 3 + 560, h = (base - y) * .5;
      d += `M${x - .5} ${base}V${Math.round(y)}M${x + .5} ${base}V${Math.round(base - h)}`;
    });
    path(s, d, col);
    let n = ''; for (let x = L; x < L + W; x++) n += `M${x}.5 ${base + (w ? 1 : 0)}v-${w ? Math.round(2 + rnd() * w) : 1}`;
    path(s, n, col);
  };
  comb(636, '#ccff66', [52, 58, 42, 48, 40, 60, 55, 66, 52, 69, 63, 66, 55, 66, 63, 63, 55, 55], 2);
  comb(710, '#c850ff', [282, 273, 262, 271, 262, 282, 276, 288, 262, 279, 294, 282, 273, 288, 282, 282, 273, 276], 1);
  comb(785, '#ffab1c', [485, 498, 495, 532, 495, 513, 543, 558, 484, 594, 591, 546, 495, 585, 588, 585, 492, 492], 0);
  comb(863, '#4040ff', [723, 723, 720, 747, 720, 741, 756, 774, 706, 786, 801, 762, 723, 789, 786, 783, 723, 720], 0);
  const ax = [[278, '0.794'], [321, '0.792'], [341, '0.791'], [351, '-1.69'], [392, '-1.69'], [415, '-1.69'], [426, '0.806'], [489, '0.743'], [499, '-1.69'], [563, '-1.7'], [573, '1.32'], [637, '0.0254'], [647, '0.0972'], [689, '0.05'], [711, '0.0245'], [721, '1.08'], [755, '0.5'], [785, '0.0025'], [795, '0.0816'], [822, '0.05'], [862, '0.00202']];
  ax.forEach(([y, t]) => label(s, 1072, y, t, 'end'));
  path(s, vticks(ax.map(v => v[0]), 1074), '#000');
  [10, 5, 5, 7.500, 5, 4.500, 6, 8].forEach((st, i) => path(s, vticks(range(tops[i] + 4, tops[i] + 62, st), 1076, 3), '#000'));
  [[1080, '15911'], [1148, '16200'], [1194, '16400'], [1241, '16600']].forEach(([x, t]) => label(s, x, 878, t));
  label(s, 1300, 878, '16911', 'start');
  label(s, 1199, 897, 'Time');
})();

/* bunch fill lamps */
for (let i = 0; i < 45; i++) {
  const n = document.createElement('i');
  n.className = 'led' + (i === 0 || (i > 5 && i < 40) ? ' on' : '');
  $('leds').appendChild(n);
}
```
